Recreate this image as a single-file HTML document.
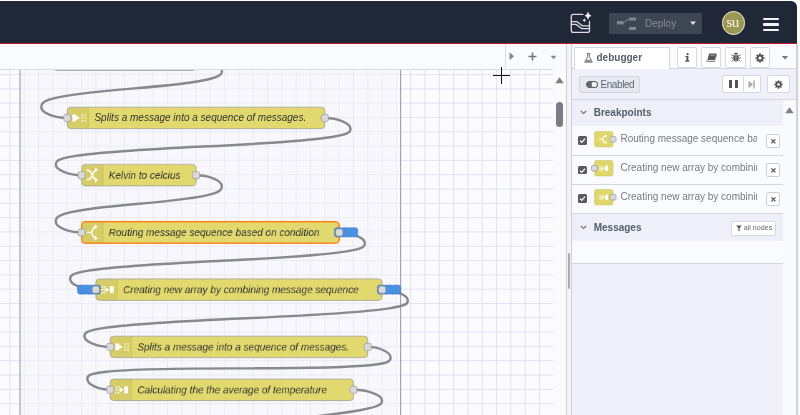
<!DOCTYPE html>
<html><head><meta charset="utf-8">
<style>
*{box-sizing:border-box;margin:0;padding:0}
html,body{width:800px;height:415px;overflow:hidden;background:#fff;font-family:"Liberation Sans",sans-serif}
#root{position:absolute;left:0;top:0;width:800px;height:415px;will-change:transform}
.abs{position:absolute}
#header{left:0;top:1px;width:797px;height:42px;background:#202838;border-top-right-radius:6px}
#redline{left:0;top:42.5px;width:797px;height:1.5px;background:#c8102e}
#wstabs{left:0;top:44px;width:566.5px;height:25.6px;background:#fafbfe;border-bottom:1px solid #dadae3}
#tabbtns{left:505px;top:44px;width:61px;height:25.25px;border-left:1px solid #dadae3;background:#fafbfe}
#ws{left:0;top:69.6px;width:553px;height:345.4px;overflow:hidden}
#wsscroll{left:553px;top:69.25px;width:13.5px;height:345.75px;background:#fbfbfd}
#sep{left:566.3px;top:44px;width:5.9px;height:371px;background:#f4f4f8;border-left:1px solid #cfcfd8;border-right:1px solid #cfcfd8}
#sidebar{left:572px;top:44px;width:223.5px;height:371px;background:#eff0f9}
.btn{position:absolute;background:#fff;border:1px solid #d8d8e0;border-radius:2px}
</style></head><body><div id="root">
<div class="abs" id="header">
  <svg class="abs" style="left:565px;top:6px" width="32" height="30" viewBox="0 0 32 30">
    <g fill="none" stroke="#dcdce0" stroke-width="1.3" stroke-linecap="round" stroke-linejoin="round">
      <path d="M17.9 7.4 H8.3 Q6.3 7.4 6.3 9.4 V23.4 Q6.3 25.4 8.3 25.4 H22.5 Q24.5 25.4 24.5 23.4 V14.5"/>
      <path d="M6.3 14.6 H11.8 L17.6 18.9 H24.5"/>
      <path d="M6.3 17.4 H11 L17 21.7 H24.5"/>
    </g>
    <path d="M23 4.6 Q23.5 7.9 26.4 8.8 Q23.5 9.7 23 13 Q22.5 9.7 19.6 8.8 Q22.5 7.9 23 4.6Z" fill="#f0f0f2"/>
    <path d="M19.3 11.3 Q19.6 13 21.1 13.3 Q19.6 13.6 19.3 15.3 Q19 13.6 17.5 13.3 Q19 13 19.3 11.3Z" fill="#f0f0f2"/>
  </svg>
  <div class="abs" style="left:608.5px;top:11.5px;width:93.5px;height:21.25px;background:#3f4653;border-radius:1px"></div>
  <svg class="abs" style="left:614px;top:14px" width="26" height="17" viewBox="0 0 26 17">
    <g fill="#7e8590">
      <rect x="2.9" y="6" width="6.8" height="3.4"/>
      <rect x="15" y="2.5" width="7" height="3"/>
      <rect x="15" y="12" width="7" height="3"/>
    </g>
    <path d="M9.7 7.3 L15 4" stroke="#7e8590" stroke-width="1"/>
  </svg>
  <div class="abs" style="left:645px;top:16.7px;font-size:10px;color:#868d98;line-height:12px">Deploy</div>
  <svg class="abs" style="left:689px;top:19px" width="8" height="6" viewBox="0 0 8 6"><path d="M1 1.6 H7 L4 5 Z" fill="#dfe2e8"/></svg>
  <div class="abs" style="left:721.5px;top:10px;width:23.6px;height:23.6px;border-radius:50%;background:#9c9753;border:1.5px solid #f0eee0"></div>
  <div class="abs" style="left:721px;top:13.4px;width:23px;text-align:center;font-family:'Liberation Serif',serif;font-size:15px;letter-spacing:-0.6px;line-height:16px;color:#f8f6e6">su</div>
  <div class="abs" style="left:763.2px;top:16.8px;width:16px;height:2.6px;background:#f2f2f4;border-radius:1px"></div>
  <div class="abs" style="left:763.2px;top:22.2px;width:16px;height:2.6px;background:#f2f2f4;border-radius:1px"></div>
  <div class="abs" style="left:763.2px;top:27.5px;width:16px;height:2.6px;background:#f2f2f4;border-radius:1px"></div>
</div>
<div class="abs" style="left:0;top:0;width:800px;height:1px;background:#fff"></div>
<div class="abs" id="redline"></div>
<div class="abs" id="wstabs"></div>
<div class="abs" id="tabbtns">
  <svg class="abs" style="left:3.2px;top:7.8px" width="6" height="9" viewBox="0 0 6 9"><path d="M0.5 0.3 L5 4.3 L0.5 8.3Z" fill="#888"/></svg>
  <svg class="abs" style="left:21.5px;top:8px" width="9" height="9" viewBox="0 0 9 9"><path d="M4.5 0.5 V8.5 M0.5 4.5 H8.5" stroke="#777" stroke-width="1.6"/></svg>
  <svg class="abs" style="left:44.2px;top:10.7px" width="7" height="5" viewBox="0 0 7 5"><path d="M0.5 0.8 H6.5 L3.5 4.2Z" fill="#888"/></svg>
</div>
<div class="abs" id="ws">
<svg width="553" height="345.40" style="position:absolute;left:0;top:0">
<g transform="translate(10.0 5.000) scale(0.7155)">
<rect x="-40" y="-40" width="900" height="600" fill="#fcfcfe"/>
<path d="M-20 -20 V 500 M0 -20 V 500 M20 -20 V 500 M40 -20 V 500 M60 -20 V 500 M80 -20 V 500 M100 -20 V 500 M120 -20 V 500 M140 -20 V 500 M160 -20 V 500 M180 -20 V 500 M200 -20 V 500 M220 -20 V 500 M240 -20 V 500 M260 -20 V 500 M280 -20 V 500 M300 -20 V 500 M320 -20 V 500 M340 -20 V 500 M360 -20 V 500 M380 -20 V 500 M400 -20 V 500 M420 -20 V 500 M440 -20 V 500 M460 -20 V 500 M480 -20 V 500 M500 -20 V 500 M520 -20 V 500 M540 -20 V 500 M560 -20 V 500 M580 -20 V 500 M600 -20 V 500 M620 -20 V 500 M640 -20 V 500 M660 -20 V 500 M680 -20 V 500 M700 -20 V 500 M720 -20 V 500 M740 -20 V 500 M760 -20 V 500 M780 -20 V 500 M-20 -20.7 H 800 M-20 -0.7 H 800 M-20 19.3 H 800 M-20 39.3 H 800 M-20 59.3 H 800 M-20 79.3 H 800 M-20 99.3 H 800 M-20 119.3 H 800 M-20 139.3 H 800 M-20 159.3 H 800 M-20 179.3 H 800 M-20 199.3 H 800 M-20 219.3 H 800 M-20 239.3 H 800 M-20 259.3 H 800 M-20 279.3 H 800 M-20 299.3 H 800 M-20 319.3 H 800 M-20 339.3 H 800 M-20 359.3 H 800 M-20 379.3 H 800 M-20 399.3 H 800 M-20 419.3 H 800 M-20 439.3 H 800 M-20 459.3 H 800 M-20 479.3 H 800 M-20 499.3 H 800" stroke="#dedeef" stroke-width="1.25" fill="none"/>
<rect x="14" y="-120" width="532" height="700" fill="#f4f4fa" fill-opacity="0.5" stroke="#94949c" stroke-width="1.4"/>
<path d="M 260 -21.4 C 278.14 -21.4 296.28 -13.899999999999999 296.28 -6.399999999999999 S 296.28 8.600000000000001 170 19 S 43.72 37.5 43.72 45.0 S 61.86 60 80 60" fill="none" stroke="#88888f" stroke-width="3.4"/>
<path d="M 440 60 C 458.0 60 476.0 67.5 476.0 75.0 S 476.0 90.0 270 100 S 64.0 117.5 64.0 125.0 S 82.0 140 100 140" fill="none" stroke="#88888f" stroke-width="3.4"/>
<path d="M 260 140 C 278.0 140 296.0 147.5 296.0 155.0 S 296.0 170.0 180 180 S 64.0 197.5 64.0 205.0 S 82.0 220 100 220" fill="none" stroke="#88888f" stroke-width="3.4"/>
<path d="M 460 220 C 478.0 220 496.0 227.5 496.0 235.0 S 496.0 250.0 290 260 S 84.0 277.5 84.0 285.0 S 102.0 300 120 300" fill="none" stroke="#88888f" stroke-width="3.4"/>
<path d="M 520 300 C 538.0 300 556.0 307.5 556.0 315.0 S 556.0 330.0 330 340 S 104.0 357.5 104.0 365.0 S 122.0 380 140 380" fill="none" stroke="#88888f" stroke-width="3.4"/>
<path d="M 500 380 C 516.0 380 532.0 387.5 532.0 395.0 S 532.0 410 320 410 S 108.0 417.5 108.0 425.0 S 124.0 440 140 440" fill="none" stroke="#88888f" stroke-width="3.4"/>
<path d="M 480 440 C 500.0 440 520.0 447.5 520.0 455.0 S 520.0 470.0 300 490 S 80.0 517.5 80.0 525.0 S 100.0 540 120 540" fill="none" stroke="#88888f" stroke-width="3.4"/>
<g transform="translate(60 -36.4)">
<rect width="200" height="30" rx="5" ry="5" fill="#b4b6c2" stroke="#999" stroke-width="1"/>
<path d="M5 0.5 H30 V29.5 H5 A4.5 4.5 0 0 1 0.5 25 V5 A4.5 4.5 0 0 1 5 0.5Z" fill="#000" fill-opacity="0.05"/>
<path d="M30 1 l0 28" stroke="#000" stroke-opacity="0.1" stroke-width="1"/>
<rect x="7.6" y="10" width="2" height="2" fill="#fff" opacity="0.9"/><rect x="7.6" y="14" width="2" height="2" fill="#fff" opacity="0.9"/><rect x="7.6" y="18" width="2" height="2" fill="#fff" opacity="0.9"/><rect x="10.8" y="10" width="2" height="2" fill="#fff" opacity="0.9"/><rect x="10.8" y="14" width="2" height="2" fill="#fff" opacity="0.9"/><rect x="10.8" y="18" width="2" height="2" fill="#fff" opacity="0.9"/><path d="M13.5 11.6 L18.5 15 L13.5 18.4 Z" fill="#fff"/><rect x="19.6" y="10.2" width="5.2" height="9.6" fill="#fff"/>
<rect x="-5" y="10" width="10" height="10" rx="3" ry="3" fill="#d9d9d9" stroke="#999" stroke-width="1"/>
<rect x="195" y="10" width="10" height="10" rx="3" ry="3" fill="#d9d9d9" stroke="#999" stroke-width="1"/>
</g>
<g transform="translate(80 45)">
<rect width="360" height="30" rx="5" ry="5" fill="#e2d96e" stroke="#999" stroke-width="1"/>
<path d="M5 0.5 H30 V29.5 H5 A4.5 4.5 0 0 1 0.5 25 V5 A4.5 4.5 0 0 1 5 0.5Z" fill="#000" fill-opacity="0.05"/>
<path d="M30 1 l0 28" stroke="#000" stroke-opacity="0.1" stroke-width="1"/>
<rect x="7.2" y="10.2" width="5" height="9.6" fill="#fff"/><path d="M12.2 11.6 L17.6 15 L12.2 18.4 Z" fill="#fff"/><rect x="20" y="10" width="2" height="2" fill="#fff" opacity="0.9"/><rect x="20" y="14" width="2" height="2" fill="#fff" opacity="0.9"/><rect x="20" y="18" width="2" height="2" fill="#fff" opacity="0.9"/><rect x="24" y="10" width="2" height="2" fill="#fff" opacity="0.9"/><rect x="24" y="14" width="2" height="2" fill="#fff" opacity="0.9"/><rect x="24" y="18" width="2" height="2" fill="#fff" opacity="0.9"/>
<text x="38" y="15" dy=".35em" font-family="Liberation Sans" font-style="italic" font-size="14" fill="#333">Splits a message into a sequence of messages.</text>
<rect x="-5" y="10" width="10" height="10" rx="3" ry="3" fill="#d9d9d9" stroke="#999" stroke-width="1"/>
<rect x="355" y="10" width="10" height="10" rx="3" ry="3" fill="#d9d9d9" stroke="#999" stroke-width="1"/>
</g>
<g transform="translate(100 125)">
<rect width="160" height="30" rx="5" ry="5" fill="#e2d96e" stroke="#999" stroke-width="1"/>
<path d="M5 0.5 H30 V29.5 H5 A4.5 4.5 0 0 1 0.5 25 V5 A4.5 4.5 0 0 1 5 0.5Z" fill="#000" fill-opacity="0.05"/>
<path d="M30 1 l0 28" stroke="#000" stroke-opacity="0.1" stroke-width="1"/>
<g fill="none" stroke="#fff" stroke-width="2" stroke-linecap="round"><path d="M8 8 C11 8 12.5 9 15 14.5 C17.5 20 19 21.8 20.5 21.8"/><path d="M8 21.5 C11 21.5 12.5 20.5 15 15 C17.5 9.5 19 7.5 20.5 7.5"/></g><path d="M19 4.3 L23 7.5 L19 10.7 Z M19 18.6 L23 21.8 L19 25 Z" fill="#fff"/>
<text x="38" y="15" dy=".35em" font-family="Liberation Sans" font-style="italic" font-size="14" fill="#333">Kelvin to celcius</text>
<rect x="-5" y="10" width="10" height="10" rx="3" ry="3" fill="#d9d9d9" stroke="#999" stroke-width="1"/>
<rect x="155" y="10" width="10" height="10" rx="3" ry="3" fill="#d9d9d9" stroke="#999" stroke-width="1"/>
</g>
<g transform="translate(100 205)">
<rect width="360" height="30" rx="5" ry="5" fill="#e2d96e" stroke="#ff7f0e" stroke-width="2"/>
<path d="M5 0.5 H30 V29.5 H5 A4.5 4.5 0 0 1 0.5 25 V5 A4.5 4.5 0 0 1 5 0.5Z" fill="#000" fill-opacity="0.05"/>
<path d="M30 1 l0 28" stroke="#000" stroke-opacity="0.1" stroke-width="1"/>
<g fill="none" stroke="#fff" stroke-width="2" stroke-linecap="round"><path d="M8 15 L13 15 C15.5 15 15.5 7 19.5 7 M13 15 C15.5 15 15.5 23 19.5 23"/></g><path d="M18.5 3.8 L22.5 7 L18.5 10.2 Z M18.5 19.8 L22.5 23 L18.5 26.2 Z" fill="#fff"/>
<text x="38" y="15" dy=".35em" font-family="Liberation Sans" font-style="italic" font-size="14" fill="#333">Routing message sequence based on condition</text>
<rect x="-5" y="10" width="10" height="10" rx="3" ry="3" fill="#d9d9d9" stroke="#999" stroke-width="1"/>
<rect x="353.6" y="8.5" width="32.1" height="12.6" rx="3" fill="#4a90e2" stroke="#2f6cc0" stroke-width="1.2" stroke-dasharray="1.6 1"/>
<rect x="355" y="10" width="10" height="10" rx="3" ry="3" fill="#d9d9d9" stroke="#999" stroke-width="1"/>
</g>
<g transform="translate(120 285)">
<rect width="400" height="30" rx="5" ry="5" fill="#e2d96e" stroke="#999" stroke-width="1"/>
<path d="M5 0.5 H30 V29.5 H5 A4.5 4.5 0 0 1 0.5 25 V5 A4.5 4.5 0 0 1 5 0.5Z" fill="#000" fill-opacity="0.05"/>
<path d="M30 1 l0 28" stroke="#000" stroke-opacity="0.1" stroke-width="1"/>
<rect x="7.6" y="10" width="2" height="2" fill="#fff" opacity="0.9"/><rect x="7.6" y="14" width="2" height="2" fill="#fff" opacity="0.9"/><rect x="7.6" y="18" width="2" height="2" fill="#fff" opacity="0.9"/><rect x="10.8" y="10" width="2" height="2" fill="#fff" opacity="0.9"/><rect x="10.8" y="14" width="2" height="2" fill="#fff" opacity="0.9"/><rect x="10.8" y="18" width="2" height="2" fill="#fff" opacity="0.9"/><path d="M13.5 11.6 L18.5 15 L13.5 18.4 Z" fill="#fff"/><rect x="19.6" y="10.2" width="5.2" height="9.6" fill="#fff"/>
<text x="38" y="15" dy=".35em" font-family="Liberation Sans" font-style="italic" font-size="14" fill="#333">Creating new array by combining message sequence</text>
<rect x="-25.5" y="8.5" width="31.8" height="12.6" rx="3" fill="#4a90e2" stroke="#2f6cc0" stroke-width="1.2" stroke-dasharray="1.6 1"/>
<rect x="-5" y="10" width="10" height="10" rx="3" ry="3" fill="#d9d9d9" stroke="#999" stroke-width="1"/>
<rect x="393.6" y="8.5" width="32.1" height="12.6" rx="3" fill="#4a90e2" stroke="#2f6cc0" stroke-width="1.2" stroke-dasharray="1.6 1"/>
<rect x="395" y="10" width="10" height="10" rx="3" ry="3" fill="#d9d9d9" stroke="#999" stroke-width="1"/>
</g>
<g transform="translate(140 365)">
<rect width="360" height="30" rx="5" ry="5" fill="#e2d96e" stroke="#999" stroke-width="1"/>
<path d="M5 0.5 H30 V29.5 H5 A4.5 4.5 0 0 1 0.5 25 V5 A4.5 4.5 0 0 1 5 0.5Z" fill="#000" fill-opacity="0.05"/>
<path d="M30 1 l0 28" stroke="#000" stroke-opacity="0.1" stroke-width="1"/>
<rect x="7.2" y="10.2" width="5" height="9.6" fill="#fff"/><path d="M12.2 11.6 L17.6 15 L12.2 18.4 Z" fill="#fff"/><rect x="20" y="10" width="2" height="2" fill="#fff" opacity="0.9"/><rect x="20" y="14" width="2" height="2" fill="#fff" opacity="0.9"/><rect x="20" y="18" width="2" height="2" fill="#fff" opacity="0.9"/><rect x="24" y="10" width="2" height="2" fill="#fff" opacity="0.9"/><rect x="24" y="14" width="2" height="2" fill="#fff" opacity="0.9"/><rect x="24" y="18" width="2" height="2" fill="#fff" opacity="0.9"/>
<text x="38" y="15" dy=".35em" font-family="Liberation Sans" font-style="italic" font-size="14" fill="#333">Splits a message into a sequence of messages.</text>
<rect x="-5" y="10" width="10" height="10" rx="3" ry="3" fill="#d9d9d9" stroke="#999" stroke-width="1"/>
<rect x="355" y="10" width="10" height="10" rx="3" ry="3" fill="#d9d9d9" stroke="#999" stroke-width="1"/>
</g>
<g transform="translate(140 425)">
<rect width="340" height="30" rx="5" ry="5" fill="#e2d96e" stroke="#999" stroke-width="1"/>
<path d="M5 0.5 H30 V29.5 H5 A4.5 4.5 0 0 1 0.5 25 V5 A4.5 4.5 0 0 1 5 0.5Z" fill="#000" fill-opacity="0.05"/>
<path d="M30 1 l0 28" stroke="#000" stroke-opacity="0.1" stroke-width="1"/>
<rect x="7.6" y="10" width="2" height="2" fill="#fff" opacity="0.9"/><rect x="7.6" y="14" width="2" height="2" fill="#fff" opacity="0.9"/><rect x="7.6" y="18" width="2" height="2" fill="#fff" opacity="0.9"/><rect x="10.8" y="10" width="2" height="2" fill="#fff" opacity="0.9"/><rect x="10.8" y="14" width="2" height="2" fill="#fff" opacity="0.9"/><rect x="10.8" y="18" width="2" height="2" fill="#fff" opacity="0.9"/><path d="M13.5 11.6 L18.5 15 L13.5 18.4 Z" fill="#fff"/><rect x="19.6" y="10.2" width="5.2" height="9.6" fill="#fff"/>
<text x="38" y="15" dy=".35em" font-family="Liberation Sans" font-style="italic" font-size="14" fill="#333">Calculating the the average of temperature</text>
<rect x="-5" y="10" width="10" height="10" rx="3" ry="3" fill="#d9d9d9" stroke="#999" stroke-width="1"/>
<rect x="335" y="10" width="10" height="10" rx="3" ry="3" fill="#d9d9d9" stroke="#999" stroke-width="1"/>
</g>
</g></svg>
</div>
<div class="abs" id="wsscroll">
  <svg class="abs" style="left:2px;top:7.8px" width="9" height="7" viewBox="0 0 9 7"><path d="M0.2 6.2 L4.5 0.2 L8.8 6.2Z" fill="#808088"/></svg>
  <div class="abs" style="left:2.5px;top:32.5px;width:7.7px;height:24.8px;border-radius:4px;background:#7d7d85"></div>
</div>
<!-- crosshair cursor -->
<div class="abs" style="left:493px;top:74.6px;width:17.3px;height:1.3px;background:#111"></div>
<div class="abs" style="left:500.8px;top:67px;width:1.7px;height:17px;background:#111"></div>
<div class="abs" id="sep">
  <div class="abs" style="left:1.1px;top:209.3px;width:1.8px;height:35.8px;background:#ababb3;border-radius:1px"></div>
</div>
<div class="abs" style="left:795.3px;top:44px;width:1px;height:371px;background:#fdfdff"></div><div class="abs" style="left:796.2px;top:44px;width:1.8px;height:371px;background:#d0d0d8"></div><div class="abs" style="left:798px;top:44px;width:2px;height:371px;background:#fafaf6"></div>
<div class="abs" id="sidebar">
<div class="abs" style="left:0;top:0;width:223.5px;height:25px;background:#fafbfe;border-bottom:1px solid #d6d6df"></div>
<div class="abs" style="left:2.3px;top:3.25px;width:95.4px;height:22.5px;background:#fff;border:1px solid #d6d6df;border-bottom:none;border-radius:1px 1px 0 0"></div>
<svg class="abs" style="left:12px;top:8.5px" width="9" height="10" viewBox="0 0 9 10"><path d="M2.8 0.6 H6.2 M3.6 0.6 V3.8 L0.7 9.2 H8.3 L5.4 3.8 V0.6" fill="none" stroke="#6c757d" stroke-width="1"/><path d="M1.9 6.8 H7.1 L8 8.9 H1Z" fill="#8c949b"/></svg>
<div class="abs" style="left:24.5px;top:8px;font-size:10px;font-weight:bold;color:#55616a;line-height:12px">debugger</div>
<div class="btn" style="left:105.3px;top:3px;width:19.5px;height:20.6px"></div>
<svg class="abs" style="left:112.8px;top:8.6px" width="5" height="9" viewBox="0 0 5 9"><circle cx="2.6" cy="1.2" r="1.15" fill="#555"/><path d="M0.3 3 H3.4 V7.6 H4.5 V8.7 H0.3 V7.6 H1.4 V4.1 H0.3Z" fill="#555"/></svg>
<div class="btn" style="left:129.2px;top:3px;width:20.3px;height:20.6px"></div>
<svg class="abs" style="left:134px;top:8.6px" width="11" height="9" viewBox="0 0 11 9"><path d="M3.2 0.4 H10.6 L8.4 7.0 H1.4 Z" fill="#585858"/><path d="M0.9 7.1 Q0.4 8.6 1.6 8.6 H8.3 L10.6 1.6" fill="none" stroke="#585858" stroke-width="0.8"/><path d="M1.3 7.3 H8.3 L8.1 8.1 H1.5 Q1 7.7 1.3 7.3Z" fill="#e6e6e6"/><path d="M4.4 1.7 H8.9 L8.6 2.8 H4.1Z" fill="#a8a8a8"/></svg>
<div class="btn" style="left:153.3px;top:3px;width:20.3px;height:20.6px"></div>
<svg class="abs" style="left:159px;top:7.8px" width="10" height="10" viewBox="0 0 10 10"><path d="M3 2.6 Q3 0.6 5 0.6 Q7 0.6 7 2.6Z" fill="#555"/><path d="M2.4 3.2 H7.6 V6.5 Q7.6 9.5 5 9.5 Q2.4 9.5 2.4 6.5Z" fill="#555"/><path d="M5 3.6 V9" stroke="#ddd" stroke-width="0.6"/><path d="M0.4 2.8 L2.4 3.8 M9.6 2.8 L7.6 3.8 M0.2 6 H2.4 M9.8 6 H7.6 M0.6 9.3 L2.6 7.8 M9.4 9.3 L7.4 7.8" stroke="#555" stroke-width="0.9"/></svg>
<div class="btn" style="left:178px;top:3px;width:20px;height:20.6px"></div>
<svg class="abs" style="left:183.4px;top:8.5px" width="10" height="10" viewBox="0 0 10 10"><path d="M8.40 4.16 L9.64 4.23 L9.64 5.77 L8.40 5.84 L8.00 6.81 L8.82 7.73 L7.73 8.82 L6.81 8.00 L5.84 8.40 L5.77 9.64 L4.23 9.64 L4.16 8.40 L3.19 8.00 L2.27 8.82 L1.18 7.73 L2.00 6.81 L1.60 5.84 L0.36 5.77 L0.36 4.23 L1.60 4.16 L2.00 3.19 L1.18 2.27 L2.27 1.18 L3.19 2.00 L4.16 1.60 L4.23 0.36 L5.77 0.36 L5.84 1.60 L6.81 2.00 L7.73 1.18 L8.82 2.27 L8.00 3.19Z" fill="#555"/><circle cx="5" cy="5" r="1.5" fill="#fff"/></svg>
<svg class="abs" style="left:209px;top:11px" width="8" height="6" viewBox="0 0 8 6"><path d="M0.8 1 H7.2 L4 4.6Z" fill="#777"/></svg>
<!-- toolbar -->
<div class="abs" style="left:0;top:25px;width:223.5px;height:30.5px;background:#eff0f9;border-bottom:1px solid #d6d6df"></div>
<div class="abs" style="left:7.25px;top:31.7px;width:60.75px;height:17px;background:#e7e8f1;border:1px solid #d3d5de;border-radius:2px"></div>
<svg class="abs" style="left:13.5px;top:37px" width="12" height="7" viewBox="0 0 12 7"><rect x="0.6" y="0.6" width="10.8" height="5.8" rx="2.9" fill="none" stroke="#5e6670" stroke-width="1.2"/><path d="M3.5 0.6 A2.9 2.9 0 0 0 3.5 6.4 H5.8 V0.6Z" fill="#5e6670"/><circle cx="8.4" cy="3.5" r="2.2" fill="#fff"/></svg>
<div class="abs" style="left:28.5px;top:35px;font-size:10px;letter-spacing:-0.43px;color:#5e6570;line-height:11px">Enabled</div>
<div class="btn" style="left:149.8px;top:31.3px;width:38.8px;height:17.5px"></div>
<div class="abs" style="left:171px;top:31.3px;width:1px;height:17.5px;background:#d8d8e0"></div>
<div class="abs" style="left:157.3px;top:36.2px;width:3px;height:8.1px;background:#555"></div>
<div class="abs" style="left:162.5px;top:36.2px;width:3px;height:8.1px;background:#555"></div>
<svg class="abs" style="left:176px;top:35.8px" width="8" height="9" viewBox="0 0 8 9"><path d="M0.5 0.5 L5 4.5 L0.5 8.5Z" fill="#b3a9ab"/><rect x="5.3" y="0.5" width="1.5" height="8" fill="#b3a9ab"/></svg>
<div class="btn" style="left:195.2px;top:31.3px;width:22.6px;height:17.5px"></div>
<svg class="abs" style="left:202px;top:36px" width="9" height="9" viewBox="0 0 10 10"><path d="M8.40 4.16 L9.64 4.23 L9.64 5.77 L8.40 5.84 L8.00 6.81 L8.82 7.73 L7.73 8.82 L6.81 8.00 L5.84 8.40 L5.77 9.64 L4.23 9.64 L4.16 8.40 L3.19 8.00 L2.27 8.82 L1.18 7.73 L2.00 6.81 L1.60 5.84 L0.36 5.77 L0.36 4.23 L1.60 4.16 L2.00 3.19 L1.18 2.27 L2.27 1.18 L3.19 2.00 L4.16 1.60 L4.23 0.36 L5.77 0.36 L5.84 1.60 L6.81 2.00 L7.73 1.18 L8.82 2.27 L8.00 3.19Z" fill="#555"/><circle cx="5" cy="5" r="1.5" fill="#fff"/></svg>
<!-- breakpoints header -->
<div class="abs" style="left:0;top:55.5px;width:211px;height:26.2px;background:#eeeff9"></div>
<svg class="abs" style="left:7.6px;top:66.2px" width="7" height="5" viewBox="0 0 7 5"><path d="M0.8 0.8 L3.5 3.6 L6.2 0.8" fill="none" stroke="#666" stroke-width="1.05"/></svg>
<div class="abs" style="left:21.7px;top:63.3px;font-size:10px;font-weight:bold;color:#535f69;line-height:12px">Breakpoints</div>
<div class="abs" style="left:0;top:81.7px;width:211px;height:29.8px;background:#fafbfe;"></div>
<div class="abs" style="left:6.1px;top:92.00px;width:8.8px;height:8.6px;background:#5a5a5c;border-radius:1.5px"></div>
<svg class="abs" style="left:6.1px;top:92.00px" width="9" height="9" viewBox="0 0 9 9"><path d="M2 4.6 L3.8 6.4 L7 2.6" fill="none" stroke="#fff" stroke-width="1.3"/></svg>
<svg class="abs" style="left:17.7px;top:87.00px" width="28" height="18" viewBox="0 0 28 18"><rect x="4.5" y="0.5" width="18.5" height="15.5" rx="2" fill="#e0d76c" stroke="#c9c060" stroke-width="0.8" stroke-dasharray="1 0.6"/><g fill="none" stroke="#fff" stroke-width="1.1"><path d="M9 8.3 H11.5 C13 8.3 13 5 15.5 5 M11.5 8.3 C13 8.3 13 11.6 15.5 11.6"/></g><path d="M15 3.5 L17.3 5 L15 6.5Z M15 10.1 L17.3 11.6 L15 13.1Z" fill="#fff"/><rect x="20" y="5.5" width="6" height="5.5" rx="1.5" fill="#d9d9d9" stroke="#a0a0a0" stroke-width="0.8"/></svg>
<div class="abs" style="left:48.5px;top:88.60px;width:136.5px;overflow:hidden;white-space:nowrap;font-size:10px;color:#797a82;line-height:11px">Routing message sequence based on condition</div>
<div class="btn" style="left:193.8px;top:90.00px;width:14.6px;height:14.2px;border-color:#cdced6"></div>
<svg class="abs" style="left:198px;top:94.00px" width="7" height="7" viewBox="0 0 7 7"><path d="M1.4 1.4 L5.4 5.4 M5.4 1.4 L1.4 5.4" stroke="#555" stroke-width="1.3"/></svg>
<div class="abs" style="left:0;top:111.0px;width:211px;height:28.8px;background:#fafbfe;border-top:1px solid #d6d6df;"></div>
<div class="abs" style="left:6.1px;top:121.60px;width:8.8px;height:8.6px;background:#5a5a5c;border-radius:1.5px"></div>
<svg class="abs" style="left:6.1px;top:121.60px" width="9" height="9" viewBox="0 0 9 9"><path d="M2 4.6 L3.8 6.4 L7 2.6" fill="none" stroke="#fff" stroke-width="1.3"/></svg>
<svg class="abs" style="left:17.7px;top:115.70px" width="28" height="18" viewBox="0 0 28 18"><rect x="4.5" y="0.5" width="18.5" height="15.5" rx="2" fill="#e0d76c" stroke="#c9c060" stroke-width="0.8" stroke-dasharray="1 0.6"/><rect x="9.5" y="6.3" width="1.1" height="1.1" fill="#fff"/><rect x="9.5" y="8" width="1.1" height="1.1" fill="#fff"/><rect x="9.5" y="9.7" width="1.1" height="1.1" fill="#fff"/><rect x="11.2" y="6.3" width="1.1" height="1.1" fill="#fff"/><rect x="11.2" y="8" width="1.1" height="1.1" fill="#fff"/><rect x="11.2" y="9.7" width="1.1" height="1.1" fill="#fff"/><path d="M12.6 6.4 L15 8.25 L12.6 10.1Z" fill="#fff"/><rect x="15.3" y="5.6" width="2.8" height="5.3" fill="#fff"/><rect x="1.5" y="5.5" width="6" height="5.5" rx="1.5" fill="#d9d9d9" stroke="#a0a0a0" stroke-width="0.8"/></svg>
<div class="abs" style="left:48.5px;top:117.80px;width:136.5px;overflow:hidden;white-space:nowrap;font-size:10px;color:#797a82;line-height:11px">Creating new array by combining message sequence</div>
<div class="btn" style="left:193.8px;top:119.30px;width:14.6px;height:14.2px;border-color:#cdced6"></div>
<svg class="abs" style="left:198px;top:123.30px" width="7" height="7" viewBox="0 0 7 7"><path d="M1.4 1.4 L5.4 5.4 M5.4 1.4 L1.4 5.4" stroke="#555" stroke-width="1.3"/></svg>
<div class="abs" style="left:0;top:139.8px;width:211px;height:29.1px;background:#fafbfe;border-top:1px solid #d6d6df;"></div>
<div class="abs" style="left:6.1px;top:150.30px;width:8.8px;height:8.6px;background:#5a5a5c;border-radius:1.5px"></div>
<svg class="abs" style="left:6.1px;top:150.30px" width="9" height="9" viewBox="0 0 9 9"><path d="M2 4.6 L3.8 6.4 L7 2.6" fill="none" stroke="#fff" stroke-width="1.3"/></svg>
<svg class="abs" style="left:17.7px;top:144.70px" width="28" height="18" viewBox="0 0 28 18"><rect x="4.5" y="0.5" width="18.5" height="15.5" rx="2" fill="#e0d76c" stroke="#c9c060" stroke-width="0.8" stroke-dasharray="1 0.6"/><rect x="9.5" y="6.3" width="1.1" height="1.1" fill="#fff"/><rect x="9.5" y="8" width="1.1" height="1.1" fill="#fff"/><rect x="9.5" y="9.7" width="1.1" height="1.1" fill="#fff"/><rect x="11.2" y="6.3" width="1.1" height="1.1" fill="#fff"/><rect x="11.2" y="8" width="1.1" height="1.1" fill="#fff"/><rect x="11.2" y="9.7" width="1.1" height="1.1" fill="#fff"/><path d="M12.6 6.4 L15 8.25 L12.6 10.1Z" fill="#fff"/><rect x="15.3" y="5.6" width="2.8" height="5.3" fill="#fff"/><rect x="20" y="5.5" width="6" height="5.5" rx="1.5" fill="#d9d9d9" stroke="#a0a0a0" stroke-width="0.8"/></svg>
<div class="abs" style="left:48.5px;top:146.90px;width:136.5px;overflow:hidden;white-space:nowrap;font-size:10px;color:#797a82;line-height:11px">Creating new array by combining message sequence</div>
<div class="btn" style="left:193.8px;top:148.10px;width:14.6px;height:14.2px;border-color:#cdced6"></div>
<svg class="abs" style="left:198px;top:152.10px" width="7" height="7" viewBox="0 0 7 7"><path d="M1.4 1.4 L5.4 5.4 M5.4 1.4 L1.4 5.4" stroke="#555" stroke-width="1.3"/></svg>
<!-- messages header -->
<div class="abs" style="left:0;top:169.4px;width:211px;height:27.9px;background:#eeeff9;border-top:1px solid #d6d6df"></div>
<svg class="abs" style="left:7.6px;top:180.7px" width="7" height="5" viewBox="0 0 7 5"><path d="M0.8 0.8 L3.5 3.6 L6.2 0.8" fill="none" stroke="#666" stroke-width="1.05"/></svg>
<div class="abs" style="left:21.7px;top:177.5px;font-size:10px;font-weight:bold;color:#535f69;line-height:12px">Messages</div>
<div class="btn" style="left:159px;top:177.4px;width:44.9px;height:14.3px"></div>
<svg class="abs" style="left:163.5px;top:181.3px" width="6" height="7" viewBox="0 0 6 7"><path d="M0.3 0.5 H5.7 L3.6 3.2 V6.5 L2.4 5.7 V3.2Z" fill="#555"/></svg>
<div class="abs" style="left:171.8px;top:180px;font-size:7.1px;color:#666;line-height:9px">all nodes</div>
<div class="abs" style="left:0;top:197.3px;width:211px;height:22.4px;background:#fafbfe;border-bottom:1px solid #d6d6df"></div>
<!-- right scrollbar -->
<div class="abs" style="left:211px;top:55.5px;width:12.5px;height:315.5px;background:#f9fafe"></div>
<svg class="abs" style="left:213px;top:63px" width="9" height="7" viewBox="0 0 9 7"><path d="M0.2 6.3 L4.5 0.2 L8.8 6.3Z" fill="#7f7f87"/></svg>

</div>
</div></body></html>
